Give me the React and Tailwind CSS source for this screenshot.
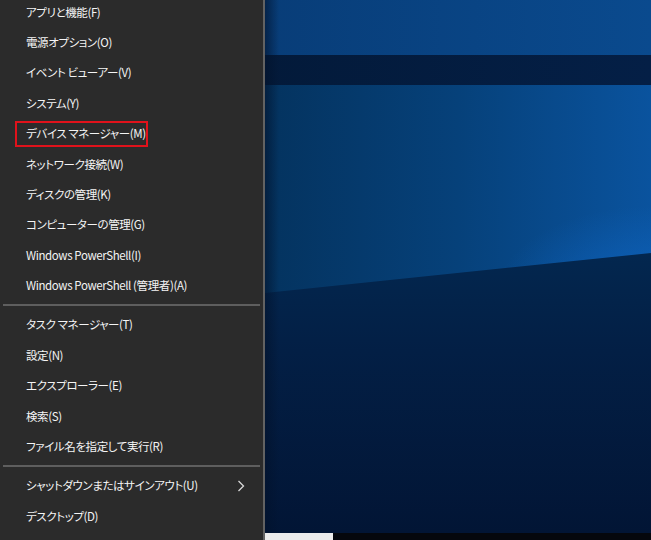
import React from "react";

const groups = [
  [
    "アプリと機能(F)",
    "電源オプション(O)",
    "イベント ビューアー(V)",
    "システム(Y)",
    "デバイス マネージャー(M)",
    "ネットワーク接続(W)",
    "ディスクの管理(K)",
    "コンピューターの管理(G)",
    "Windows PowerShell(I)",
    "Windows PowerShell (管理者)(A)",
  ],
  ["タスク マネージャー(T)", "設定(N)", "エクスプローラー(E)", "検索(S)", "ファイル名を指定して実行(R)"],
  ["シャットダウンまたはサインアウト(U)", "デスクトップ(D)"],
];

const MenuItem = ({ label }) => (
  <div className="relative flex h-[30.4px] shrink-0 items-center pl-[26px] pr-3 text-[11.5px] tracking-[-0.4px] text-[#f4f4f4]">
    {label === "デバイス マネージャー(M)" && (
      <div className="absolute left-[15px] top-[2px] h-[26px] w-[133px] border-2 border-[#e0121b]" />
    )}
    <span className="flex-1 whitespace-nowrap">{label}</span>
    {label.startsWith("シャットダウン") && (
      <svg width="8" height="12" viewBox="0 0 8 12" className="mr-[6px]">
        <polyline points="1.5,1 6.5,6 1.5,11" fill="none" stroke="#d8d8d8" strokeWidth="1.3" />
      </svg>
    )}
  </div>
);

const Wallpaper = () => (
  <svg className="block h-full w-full" viewBox="0 0 386 533" preserveAspectRatio="none">
    <defs>
      <linearGradient id="top" x1="0" y1="0" x2="1" y2="0">
        <stop offset="0" stopColor="#083d78" />
        <stop offset="1" stopColor="#0a4a8e" />
      </linearGradient>
      <linearGradient id="mid" x1="0" y1="0" x2="1" y2="0">
        <stop offset="0" stopColor="#04335f" />
        <stop offset="0.5" stopColor="#06417a" />
        <stop offset="1" stopColor="#0a539e" />
      </linearGradient>
      <radialGradient id="glow" cx="1" cy="0.95" r="0.4">
        <stop offset="0" stopColor="#0f66c4" stopOpacity="0.75" />
        <stop offset="1" stopColor="#0f66c4" stopOpacity="0" />
      </radialGradient>
      <linearGradient id="band" x1="0" y1="0" x2="1" y2="0">
        <stop offset="0" stopColor="#031a3a" />
        <stop offset="1" stopColor="#041f46" />
      </linearGradient>
      <linearGradient id="low" x1="0" y1="0" x2="0" y2="1">
        <stop offset="0" stopColor="#03274f" />
        <stop offset="0.35" stopColor="#031f45" />
        <stop offset="1" stopColor="#021535" />
      </linearGradient>
      <linearGradient id="edge" x1="0" y1="0" x2="1" y2="0">
        <stop offset="0" stopColor="#02122b" stopOpacity="0.6" />
        <stop offset="1" stopColor="#02122b" stopOpacity="0" />
      </linearGradient>
    </defs>
    <rect x="0" y="0" width="386" height="533" fill="url(#top)" />
    <rect x="0" y="85" width="386" height="220" fill="url(#mid)" />
    <rect x="0" y="85" width="386" height="220" fill="url(#glow)" />
    <rect x="0" y="55" width="386" height="30" fill="url(#band)" />
    <polygon points="0,293 386,253 386,533 0,533" fill="url(#low)" />
    <rect x="0" y="0" width="14" height="533" fill="url(#edge)" />
  </svg>
);

export default function App() {
  return (
    <div
      className="flex h-[540px] w-[651px] overflow-hidden bg-black [font-feature-settings:'palt']"
      style={{ fontFamily: "'Noto Sans CJK JP', 'Noto Sans', sans-serif" }}
    >
      <div className="flex h-full w-[265px] shrink-0 flex-col border-r-2 border-[#626262] bg-[#2b2b2b]">
        <div className="mt-[-3px] flex flex-col">
          {groups.map((g, i) => (
            <React.Fragment key={i}>
              {i > 0 && (
                <div className="flex h-[9px] items-center px-[3px]">
                  <div className="h-[2px] w-full bg-[#5e5e5e]" />
                </div>
              )}
              {g.map((label) => (
                <MenuItem key={label} label={label} />
              ))}
            </React.Fragment>
          ))}
        </div>
      </div>
      <div className="flex flex-1 flex-col">
        <div className="flex-1">
          <Wallpaper />
        </div>
        <div className="flex h-[7px] bg-[#05070d]">
          <div className="w-[68px] bg-[#ececec]" />
        </div>
      </div>
    </div>
  );
}
